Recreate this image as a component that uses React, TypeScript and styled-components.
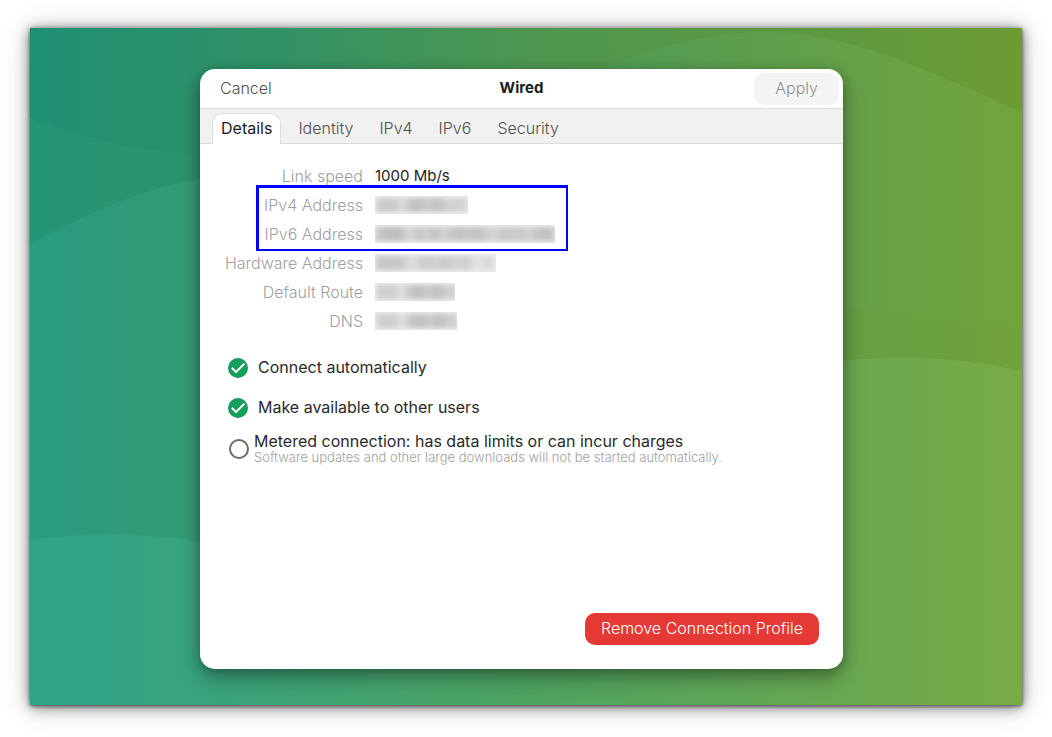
import React, { useState } from "react";
import styled, { createGlobalStyle } from "styled-components";

const GlobalStyle = createGlobalStyle`
  *, *::before, *::after { box-sizing: border-box; }
  body {
    margin: 0;
    background: #fff;
    color: #1c1c1c;
    font: 300 16px/20px Inter, "Open Sans", sans-serif;
  }
  button, input { font: inherit; }
`;

const Page = styled.div`
  display: flex;
  min-height: 100vh;
  padding: 28px 30px 32px;
`;

const Desktop = styled.main`
  position: relative;
  flex: 1;
  display: flex;
  justify-content: center;
  padding: 41px 179px 36px 170px;
  box-shadow: 0 1px 4px rgba(0, 0, 0, 0.6), 0 2px 14px rgba(0, 0, 0, 0.5), 0 2px 32px rgba(0, 0, 0, 0.12);
`;

const WallpaperArt = styled.svg`
  position: absolute;
  inset: 0;
  width: 100%;
  height: 100%;
`;

const Dialog = styled.section`
  flex: 1;
  display: flex;
  flex-direction: column;
  min-height: 560px;
  border-radius: 15px;
  background: #fff;
  overflow: hidden;
`;

const DialogShadow = styled.div`
  position: relative;
  flex: 1;
  display: flex;
  max-width: 900px;
  border-radius: 15px;
  box-shadow: 0 8px 20px rgba(0, 0, 0, 0.36), 0 2px 10px rgba(0, 0, 0, 0.16);
`;

const TitleBar = styled.header`
  display: grid;
  grid-template-columns: 1fr auto 1fr;
  align-items: center;
  height: 40px;
  padding: 0 4px;
  border-bottom: 1px solid #dcdcdc;
`;

const Title = styled.h1`
  margin: 0;
  padding-bottom: 1px;
  font-size: 15px;
  font-weight: 700;
  line-height: 20px;
`;

const HeaderButton = styled.button<{ $side: "start" | "end" }>`
  justify-self: ${(p) => p.$side};
  height: 32px;
  padding: 0 ${(p) => (p.$side === "end" ? 21 : 16)}px 2px;
  border: 0;
  border-radius: 10px;
  background: transparent;
  color: #505050;

  &:disabled {
    background: #f4f4f4;
    color: #909090;
  }
`;

const TabBar = styled.div`
  display: flex;
  align-items: flex-end;
  height: 35px;
  padding: 0 12px;
  background: #f1f1f1;
  box-shadow: inset 0 -1px #dcdcdc;
`;

const Tab = styled.button`
  height: 31px;
  padding: 0 8px 2px;
  margin-right: 8px;
  border: 1px solid transparent;
  border-bottom: 0;
  border-radius: 10px 10px 0 0;
  background: transparent;
  color: #505050;

  &[aria-selected="true"] {
    border-color: #dcdcdc;
    background: #fff;
    color: #1c1c1c;
    font-weight: 400;
  }
`;

const Panel = styled.div`
  flex: 1;
  display: flex;
  flex-direction: column;
  padding: 17px 24px 24px;
`;

const DetailList = styled.dl`
  margin: 0;
`;

const DetailRow = styled.div`
  display: grid;
  grid-template-columns: 139px 1fr;
  column-gap: 12px;
  align-items: center;
  height: 29px;
  white-space: nowrap;
`;

const Term = styled.dt`
  color: #a0a0a0;
  text-align: right;
`;

const Value = styled.dd`
  margin: 0;
  font-size: 15px;
  font-weight: 400;
`;

const Highlight = styled.div`
  position: relative;

  &::after {
    content: "";
    position: absolute;
    top: -5px;
    bottom: -3px;
    left: 32px;
    width: 312px;
    border: 3px solid #0000fe;
    border-width: 3px 2px 2px 3px;
    pointer-events: none;
  }
`;

const Redaction = styled.span<{ $width: number; $tones: number[] }>`
  display: block;
  width: ${(p) => p.$width}px;
  height: 18px;
  overflow: hidden;
  background: #ededed;

  &::before {
    content: "";
    display: block;
    height: 14px;
    margin: 2px 0;
    filter: blur(2px);
    background: linear-gradient(
      90deg,
      ${(p) => p.$tones.map((t) => `rgb(${t}, ${t}, ${t})`).join(", ")}
    );
  }
`;

const Options = styled.div`
  display: flex;
  flex-direction: column;
  padding-top: 13px;
`;

const Option = styled.label<{ $gap: number; $inset: number }>`
  display: flex;
  align-items: center;
  column-gap: ${(p) => p.$gap}px;
  height: 40px;
  padding-left: ${(p) => p.$inset}px;

  &:last-child {
    height: 42px;
  }
`;

const Tick = styled.span`
  display: grid;
  width: 20px;
  height: 20px;

  > * {
    grid-area: 1 / 1;
  }

  > svg {
    pointer-events: none;
  }
`;

const TickInput = styled.input`
  appearance: none;
  width: 20px;
  height: 20px;
  margin: 0;
  border: 2px solid #6a6a6a;
  border-radius: 50%;
  background: #fff;

  &:checked {
    border-color: #149d5b;
    background: #149d5b;
  }

  &:not(:checked) + svg {
    visibility: hidden;
  }
`;

const OptionText = styled.span`
  display: flex;
  flex-direction: column;
  padding-bottom: 2px;
`;

const OptionTitle = styled.span`
  color: #2a2a2a;
  font-weight: 400;
  line-height: 18px;
`;

const OptionNote = styled.span`
  color: #a0a0a0;
  font-size: 13px;
  line-height: 14px;
`;

const Actions = styled.div`
  display: flex;
  justify-content: flex-end;
  margin-top: auto;
`;

const RemoveButton = styled.button`
  height: 32px;
  padding: 0 16px 2px;
  border: 0;
  border-radius: 10px;
  background: #e53935;
  color: #fff;
`;

const waves = [
  { id: "base", stops: ["#1f8f73", "#2f9168", "#4f974f", "#5f993f", "#6d9b33"], d: "M0 0H992V677H0Z" },
  {
    id: "far",
    stops: ["#249576", "#2f9268", "#4c9a58", "#65a048", "#73a43c"],
    d: "M0 90C60 112 110 124 170 126C350 128 520 60 590 34C640 14 690 4 735 4C820 4 900 44 992 84V677H0Z",
  },
  {
    id: "middle",
    stops: ["#299b80", "#38996f", "#4c9a58", "#659f44", "#71a13a"],
    d: "M0 216C60 184 120 158 170 151C340 130 480 260 813 280C880 286 930 294 992 300V677H0Z",
  },
  {
    id: "near",
    stops: ["#2fa38a", "#3ca37a", "#4fa35f", "#69a852", "#79ab45"],
    d: "M0 512C60 504 120 505 170 514C340 545 520 340 813 333C860 328 920 327 992 343V677H0Z",
  },
];

function Wallpaper() {
  return (
    <WallpaperArt viewBox="0 0 992 677" preserveAspectRatio="none" aria-hidden="true">
      <defs>
        {waves.map((w) => (
          <linearGradient key={w.id} id={w.id} gradientUnits="userSpaceOnUse" x1="0" x2="992" y1="0" y2="0">
            {w.stops.map((c, i) => (
              <stop key={c} offset={[0, 0.22, 0.52, 0.82, 1][i]} stopColor={c} />
            ))}
          </linearGradient>
        ))}
      </defs>
      {waves.map((w) => (
        <path key={w.id} d={w.d} fill={`url(#${w.id})`} />
      ))}
    </WallpaperArt>
  );
}

function Detail({ term, children }: { term: string; children: React.ReactNode }) {
  return (
    <DetailRow>
      <Term>{term}</Term>
      <Value>{children}</Value>
    </DetailRow>
  );
}

function TickBox({ defaultChecked = false }: { defaultChecked?: boolean }) {
  return (
    <Tick>
      <TickInput type="checkbox" defaultChecked={defaultChecked} />
      <svg width="20" height="20" viewBox="0 0 20 20" fill="none" aria-hidden="true">
        <path d="M3.8 9.8L8 14L16.4 5.6" stroke="#fff" strokeWidth="2" />
      </svg>
    </Tick>
  );
}

const tabs = ["Details", "Identity", "IPv4", "IPv6", "Security"];

export default function App() {
  const [tab, setTab] = useState("Details");
  return (
    <Page>
      <GlobalStyle />
      <Desktop>
        <Wallpaper />
        <DialogShadow>
          <Dialog aria-labelledby="dialog-title">
            <TitleBar>
              <HeaderButton type="button" $side="start">Cancel</HeaderButton>
              <Title id="dialog-title">Wired</Title>
              <HeaderButton type="button" $side="end" disabled>Apply</HeaderButton>
            </TitleBar>
            <TabBar role="tablist">
              {tabs.map((name) => (
                <Tab key={name} type="button" role="tab" aria-selected={tab === name} onClick={() => setTab(name)}>
                  {name}
                </Tab>
              ))}
            </TabBar>
            <Panel role="tabpanel">
              <DetailList>
                <Detail term="Link speed">1000 Mb/s</Detail>
                <Highlight>
                  <Detail term="IPv4 Address">
                    <Redaction $width={93} $tones={[222, 202, 204, 205, 220, 204, 194, 196, 205, 194, 198, 213, 207, 212, 220]} />
                  </Detail>
                  <Detail term="IPv6 Address">
                    <Redaction $width={180} $tones={[210, 194, 190, 194, 214, 200, 207, 196, 210, 200, 194, 202, 192, 207, 213, 200, 205, 202, 210, 196, 194, 204]} />
                  </Detail>
                </Highlight>
                <Detail term="Hardware Address">
                  <Redaction $width={121} $tones={[210, 198, 200, 200, 210, 223, 208, 204, 210, 202, 207, 214, 206, 222, 225, 214, 230]} />
                </Detail>
                <Detail term="Default Route">
                  <Redaction $width={80} $tones={[224, 206, 208, 208, 225, 204, 194, 194, 205, 194, 196, 210, 198]} />
                </Detail>
                <Detail term="DNS">
                  <Redaction $width={82} $tones={[222, 204, 206, 208, 225, 204, 194, 194, 205, 194, 196, 210, 204]} />
                </Detail>
              </DetailList>
              <Options>
                <Option $gap={10} $inset={4}>
                  <TickBox defaultChecked />
                  <OptionText>
                    <OptionTitle>Connect automatically</OptionTitle>
                  </OptionText>
                </Option>
                <Option $gap={10} $inset={4}>
                  <TickBox defaultChecked />
                  <OptionText>
                    <OptionTitle>Make available to other users</OptionTitle>
                  </OptionText>
                </Option>
                <Option $gap={5} $inset={5}>
                  <TickBox />
                  <OptionText>
                    <OptionTitle>Metered connection: has data limits or can incur charges</OptionTitle>
                    <OptionNote>Software updates and other large downloads will not be started automatically.</OptionNote>
                  </OptionText>
                </Option>
              </Options>
              <Actions>
                <RemoveButton type="button">Remove Connection Profile</RemoveButton>
              </Actions>
            </Panel>
          </Dialog>
        </DialogShadow>
      </Desktop>
    </Page>
  );
}
